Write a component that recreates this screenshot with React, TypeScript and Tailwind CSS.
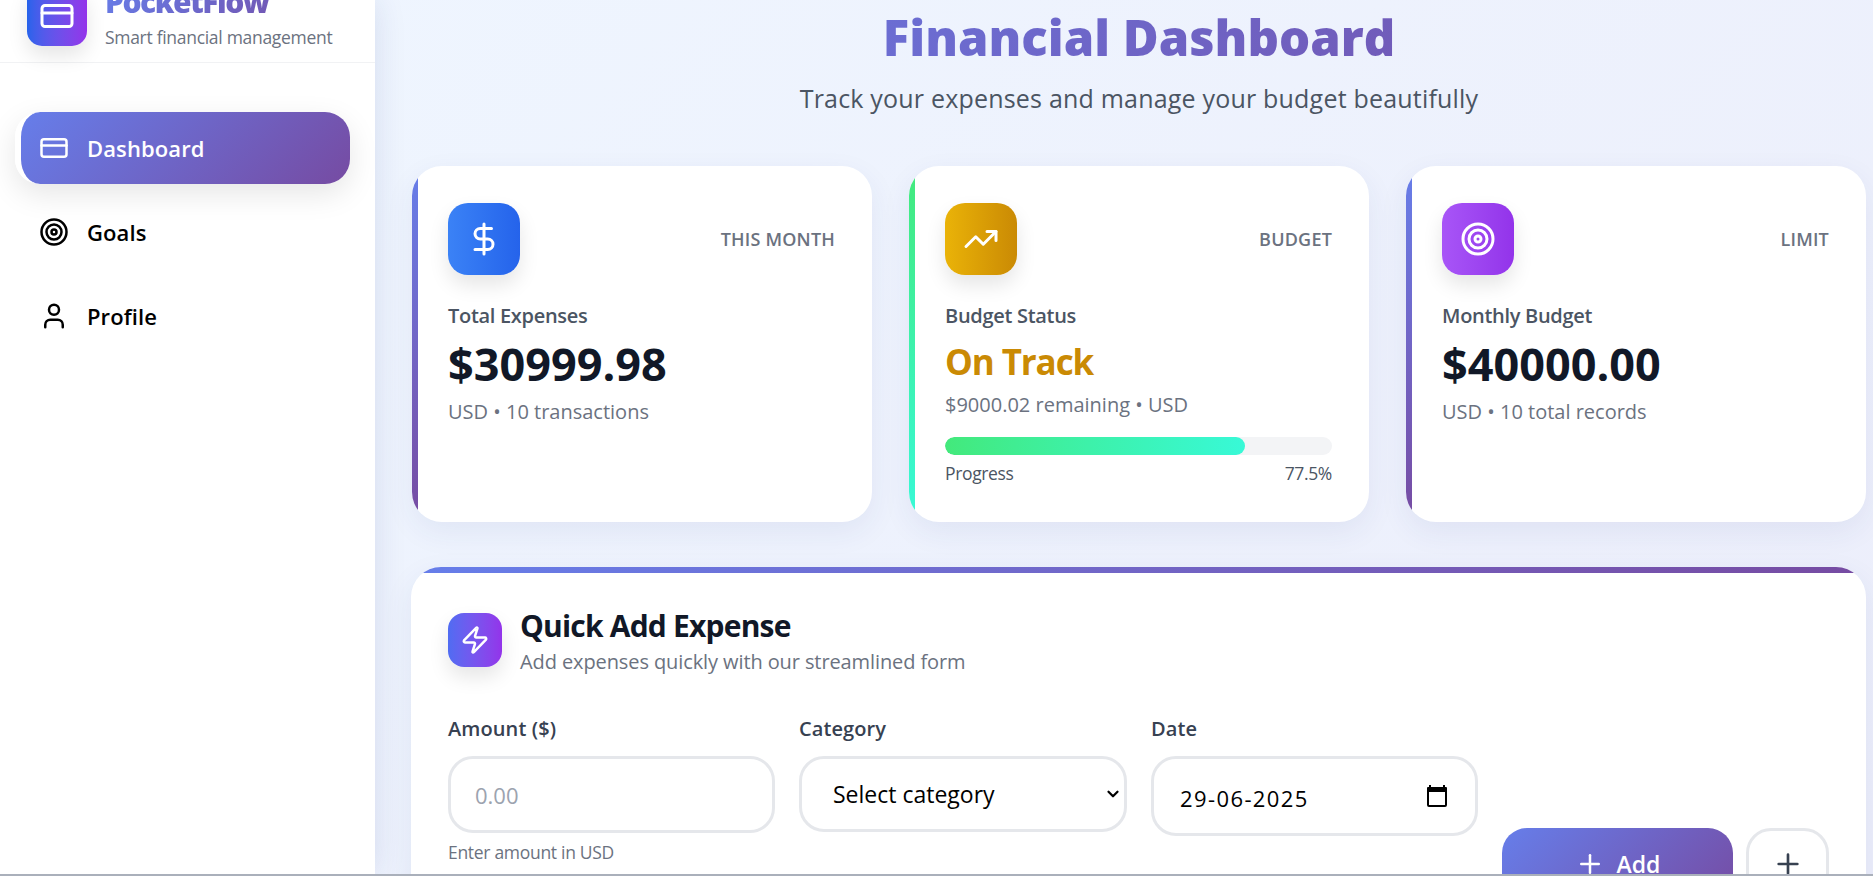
import { ChevronDown, CreditCard, DollarSign, Plus, Target, TrendingUp, User, Zap } from "lucide-react";
import type { ReactNode } from "react";

function NavItem({ icon, label, active }: { icon: ReactNode; label: string; active?: boolean }) {
  return (
    <div
      className={
        active
          ? "flex h-[72px] w-[335px] items-center gap-[18px] overflow-hidden rounded-[25px] border-l-[6px] border-white bg-[linear-gradient(135deg,#667eea,#764ba2)] pl-[18px] font-semibold text-white shadow-[0_10px_30px_rgba(0,0,0,0.1)]"
          : "flex h-[72px] w-[335px] items-center gap-[18px] pl-[24px] font-semibold text-black"
      }
    >
      {icon}
      <span className="pt-[1px] text-[22px] tracking-[0.1px]">{label}</span>
    </div>
  );
}

function Sidebar() {
  return (
    <aside className="h-full w-[375px] shrink-0 bg-white shadow-[0_0_30px_rgba(30,50,120,0.12)]">
      <div className="-mt-[14px] flex h-[77px] items-start gap-[18px] border-b border-[#f1f2f4] pl-[27px]">
        <div className="flex h-[60px] w-[60px] items-center justify-center rounded-[15px] bg-gradient-to-r from-[#2563eb] to-[#9333ea] text-white shadow-[0_10px_20px_rgba(0,0,0,0.1)]">
          <CreditCard size={36} strokeWidth={2} />
        </div>
        <div className="-mt-[2px]">
          <div className="bg-[linear-gradient(135deg,#667eea,#764ba2)] bg-clip-text text-[30px] leading-[36px] font-extrabold tracking-[-1.5px] text-transparent">
            PocketFlow
          </div>
          <div className="mt-[5px] text-[17.5px] leading-[24px] tracking-[-0.3px] text-[#6b7280]">
            Smart financial management
          </div>
        </div>
      </div>
      <nav className="mt-[49px] flex flex-col gap-[12px] pl-[15px]">
        <NavItem active label="Dashboard" icon={<CreditCard size={30} strokeWidth={2} />} />
        <NavItem label="Goals" icon={<Target size={30} strokeWidth={2} />} />
        <NavItem label="Profile" icon={<User size={30} strokeWidth={2} />} />
      </nav>
    </aside>
  );
}

function StatCard({
  bar,
  iconBg,
  icon,
  tag,
  children,
}: {
  bar: string;
  iconBg: string;
  icon: ReactNode;
  tag: string;
  children: ReactNode;
}) {
  return (
    <div className="relative h-[356px] overflow-hidden rounded-[30px] bg-white p-[37px] pl-[36px] shadow-[0_10px_30px_rgba(40,60,130,0.07)]">
      <div className={`absolute top-0 bottom-0 left-0 w-[6px] ${bar}`} />
      <div className="flex items-center justify-between">
        <div className={`flex h-[72px] w-[72px] items-center justify-center rounded-[20px] text-white shadow-[0_10px_20px_rgba(0,0,0,0.1)] ${iconBg}`}>
          {icon}
        </div>
        <span className="text-[18px] font-semibold tracking-[0.2px] text-[#6b7280]">{tag}</span>
      </div>
      {children}
    </div>
  );
}

function CardLabel({ children }: { children: ReactNode }) {
  return <div className="mt-[26px] text-[20px] leading-[30px] font-semibold tracking-[-0.3px] text-[#4b5563]">{children}</div>;
}

function CardValue({ children }: { children: ReactNode }) {
  return <div className="mt-[5px] text-[45px] leading-[56px] font-bold text-[#111827]">{children}</div>;
}

function CardSub({ children, className }: { children: ReactNode; className: string }) {
  return <div className={`text-[20px] leading-[28px] text-[#6b7280] ${className}`}>{children}</div>;
}

function FieldLabel({ children }: { children: ReactNode }) {
  return <div className="mb-[13px] text-[20px] leading-[29px] font-semibold tracking-[0.1px] text-[#374151]">{children}</div>;
}

const inputBox = "w-full rounded-[25px] border-[3px] border-[#e5e7eb] bg-white text-black outline-none";

function QuickAdd() {
  return (
    <section className="relative mt-[45px] -ml-[1px] h-[400px] overflow-hidden rounded-[30px] bg-white px-[37px] pt-[46px] shadow-[0_10px_30px_rgba(40,60,130,0.08)]">
      <div className="absolute top-0 right-0 left-0 h-[6px] bg-gradient-to-r from-[#667eea] to-[#764ba2]" />
      <div className="flex items-start gap-[18px]">
        <div className="flex h-[54px] w-[54px] items-center justify-center rounded-[16px] bg-gradient-to-r from-[#4f6cf2] to-[#9333ea] text-white shadow-[0_10px_20px_rgba(0,0,0,0.1)]">
          <Zap size={30} strokeWidth={2} />
        </div>
        <div className="-mt-[7px]">
          <h2 className="text-[30px] leading-[40px] font-bold tracking-[-0.8px] text-[#111827]">Quick Add Expense</h2>
          <p className="mt-[1px] text-[20px] leading-[30px] tracking-[-0.1px] text-[#6b7280]">
            Add expenses quickly with our streamlined form
          </p>
        </div>
      </div>
      <div className="mt-[37px] grid grid-cols-[327px_328px_327px_1fr] items-start gap-[24px]">
        <div>
          <FieldLabel>Amount ($)</FieldLabel>
          <input className={`${inputBox} h-[77px] px-[24px] text-[22px] placeholder:text-[#9ca3af]`} placeholder="0.00" readOnly />
          <div className="mt-[6px] text-[17.5px] tracking-[-0.3px] text-[#6b7280]">Enter amount in USD</div>
        </div>
        <div>
          <FieldLabel>Category</FieldLabel>
          <div className="relative">
            <select className={`${inputBox} h-[76px] appearance-none pr-[24px] pl-[31px] text-[23px]`} defaultValue="">
              <option value="">Select category</option>
              <option value="food">Food</option>
            </select>
            <ChevronDown className="absolute top-[29px] right-[5px] text-black" size={18} strokeWidth={3} />
          </div>
        </div>
        <div>
          <FieldLabel>Date</FieldLabel>
          <div className={`${inputBox} flex h-[80px] items-center justify-between pr-[24px] pl-[26px]`}>
            <span className="pt-[5px] text-[22px] tracking-[1.4px]">29-06-2025</span>
            <svg width="22" height="24" viewBox="0 0 22 24" className="mr-[3px]" aria-hidden="true">
              <path d="M5 1v2h12V1h2v2h1a1 1 0 0 1 1 1v17a2 2 0 0 1-2 2H3a2 2 0 0 1-2-2V4a1 1 0 0 1 1-1h1V1h2zm-2 7v13h16V8H3z" fill="#000" />
            </svg>
          </div>
        </div>
        <div className="flex gap-[13px] pt-[114px]">
          <div className="flex h-[80px] w-[231px] items-start justify-center gap-[12px] rounded-[25px] bg-[linear-gradient(135deg,#667eea,#764ba2)] pt-[21px] text-white">
            <Plus size={30} strokeWidth={2} />
            <span className="text-[23px] leading-[30px] font-semibold">Add</span>
          </div>
          <div className="flex h-[80px] w-[83px] items-start justify-center rounded-[25px] border-[3px] border-[#e5e7eb] pt-[17px] text-[#374151]">
            <Plus size={32} strokeWidth={2} />
          </div>
        </div>
      </div>
    </section>
  );
}

export default function App() {
  return (
    <div className="flex h-[876px] flex-col overflow-hidden font-['Open_Sans','Noto_Sans',sans-serif]">
      <div className="flex min-h-0 flex-1 overflow-hidden bg-[linear-gradient(135deg,#eff6ff,#eceefb)]">
        <Sidebar />
        <main className="ml-[37px] w-[1454px] shrink-0">
          <div className="flex h-[166px] flex-col items-center">
            <h1 className="mt-[4px] w-full bg-[linear-gradient(135deg,#667eea,#764ba2)] bg-clip-text text-center text-[49px] leading-[66px] font-black text-transparent">
              Financial Dashboard
            </h1>
            <p className="mt-[11px] text-[25px] leading-[34px] tracking-[0.2px] text-[#4b5563]">
              Track your expenses and manage your budget beautifully
            </p>
          </div>
          <div className="grid grid-cols-3 gap-[37px]">
            <StatCard
              bar="bg-gradient-to-b from-[#667eea] to-[#764ba2]"
              iconBg="bg-gradient-to-r from-[#3b82f6] to-[#2563eb]"
              icon={<DollarSign size={36} strokeWidth={2} />}
              tag="THIS MONTH"
            >
              <CardLabel>Total Expenses</CardLabel>
              <CardValue>$30999.98</CardValue>
              <CardSub className="mt-[6px]">USD • 10 transactions</CardSub>
            </StatCard>
            <StatCard
              bar="bg-gradient-to-b from-[#43e97b] to-[#38f9d7]"
              iconBg="bg-gradient-to-r from-[#eab308] to-[#ca8a04]"
              icon={<TrendingUp size={36} strokeWidth={2} />}
              tag="BUDGET"
            >
              <CardLabel>Budget Status</CardLabel>
              <div className="mt-[6px] text-[35px] leading-[50px] font-bold tracking-[-1.1px] text-[#ca8a04]">On Track</div>
              <CardSub className="mt-[4px]">$9000.02 remaining • USD</CardSub>
              <div className="mt-[18px] h-[18px] overflow-hidden rounded-full bg-[#f3f4f6]">
                <div className="h-full w-[77.5%] rounded-full bg-gradient-to-r from-[#43e97b] to-[#38f9d7]" />
              </div>
              <div className="mt-[5px] flex justify-between text-[17.5px] leading-[26px] tracking-[-0.35px] text-[#4b5563]">
                <span>Progress</span>
                <span>77.5%</span>
              </div>
            </StatCard>
            <StatCard
              bar="bg-gradient-to-b from-[#667eea] to-[#764ba2]"
              iconBg="bg-gradient-to-r from-[#a855f7] to-[#9333ea]"
              icon={<Target size={36} strokeWidth={2} />}
              tag="LIMIT"
            >
              <CardLabel>Monthly Budget</CardLabel>
              <CardValue>$40000.00</CardValue>
              <CardSub className="mt-[6px]">USD • 10 total records</CardSub>
            </StatCard>
          </div>
          <QuickAdd />
        </main>
      </div>
      <div className="h-[2px] shrink-0 bg-[#aab0bb]" />
    </div>
  );
}
